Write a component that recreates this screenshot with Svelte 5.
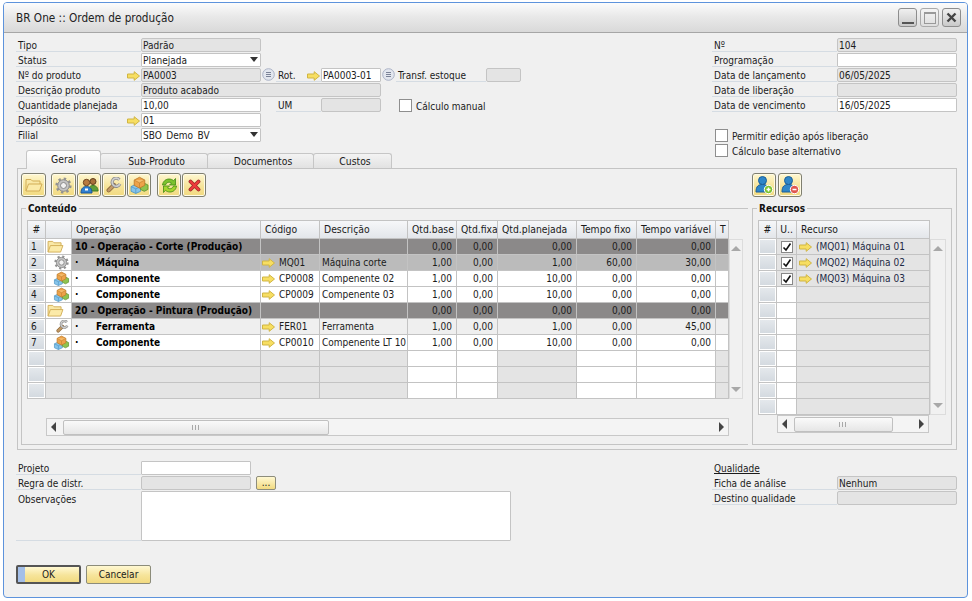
<script>
  const cols = [
    { t: '#', w: 19 }, { t: '', w: 26 }, { t: 'Operação', w: 189 }, { t: 'Código', w: 59 }, { t: 'Descrição', w: 88 },
    { t: 'Qtd.base', w: 49 }, { t: 'Qtd.fixa', w: 41 }, { t: 'Qtd.planejada', w: 79 }, { t: 'Tempo fixo', w: 60 }, { t: 'Tempo variável', w: 79 }, { t: 'T', w: 13 }
  ];
  const template = cols.map((c) => c.w + 'px').join(' ');
  const rows = [
    { n: 1, kind: 'group', icon: 'folder', op: '10 - Operação - Corte (Produção)', code: '', desc: '', v: ['0,00', '0,00', '0,00', '0,00', '0,00'] },
    { n: 2, kind: 'mach', icon: 'gear', op: 'Máquina', code: 'MQ01', desc: 'Máquina corte', v: ['1,00', '0,00', '1,00', '60,00', '30,00'] },
    { n: 3, kind: 'plain', icon: 'boxes', op: 'Componente', code: 'CP0008', desc: 'Compenente 02', v: ['1,00', '0,00', '10,00', '0,00', '0,00'] },
    { n: 4, kind: 'plain', icon: 'boxes', op: 'Componente', code: 'CP0009', desc: 'Compenente 03', v: ['1,00', '0,00', '10,00', '0,00', '0,00'] },
    { n: 5, kind: 'group', icon: 'folder', op: '20 - Operação - Pintura (Produção)', code: '', desc: '', v: ['0,00', '0,00', '0,00', '0,00', '0,00'] },
    { n: 6, kind: 'tool', icon: 'wrench', op: 'Ferramenta', code: 'FER01', desc: 'Ferramenta', v: ['1,00', '0,00', '1,00', '0,00', '45,00'] },
    { n: 7, kind: 'plain', icon: 'boxes', op: 'Componente', code: 'CP0010', desc: 'Compenente LT 10', v: ['1,00', '0,00', '10,00', '0,00', '0,00'] }
  ];
  const recursos = ['(MQ01) Máquina 01', '(MQ02) Máquina 02', '(MQ03) Máquina 03', '', '', '', '', '', '', '', ''];
</script>

{#snippet arrow()}
  <svg class="arrow" width="13" height="10" viewBox="0 0 13 10"><path d="M.5 3h6.700V.7L12.500 5l-5.300 4.300V7H.5z" fill="#f7de62" stroke="#d0b543" stroke-width="1"/></svg>
{/snippet}

{#snippet circle()}
  <svg class="circ" width="13" height="13" viewBox="0 0 13 13"><circle cx="6.500" cy="6.500" r="5.800" fill="#e2e6ee" stroke="#aab2c6"/><path d="M4 4.500h5M4 6.500h5M4 8.500h5" stroke="#7b8398"/></svg>
{/snippet}

{#snippet icon(name)}
  {#if name === 'folder'}
    <svg class="i-folder" viewBox="0 0 18 14"><path d="M1 13V1.500h5l1.500 1.500h7.500v3" fill="#f9e8a6" stroke="#d2ad55"/><path d="M1 13l2.500-7H17l-2.500 7z" fill="#fbeaa8" stroke="#d2ad55"/></svg>
  {:else if name === 'gear'}
    <svg class="i-gear" viewBox="0 0 17 17"><circle cx="8.500" cy="8.500" r="5.800" fill="#c4c4c4" stroke="#8a8a8a"/><circle cx="8.500" cy="8.500" r="6.800" fill="none" stroke="#929292" stroke-width="2.600" stroke-dasharray="2.400 2.940"/><circle cx="8.500" cy="8.500" r="3" fill="#f1f1f1" stroke="#888"/></svg>
  {:else if name === 'people'}
    <svg class="i-people" viewBox="0 0 19 17"><circle cx="13" cy="4.500" r="3" fill="#a8703a" stroke="#5f3f1e"/><path d="M8.500 14c0-4 2-5.500 4.500-5.500S18 10 18 14z" fill="#5f9e38" stroke="#3d7a22"/><circle cx="6.500" cy="5.500" r="3.200" fill="#b87a3f" stroke="#6e4520"/><path d="M1 16c0-5 2.500-6.500 5.500-6.500S12 11 12 16z" fill="#2f7fd0" stroke="#1b5596"/><path d="M5 11.500h3v2H5z" fill="#fff"/></svg>
  {:else if name === 'wrench'}
    <svg class="i-wrench" viewBox="0 0 15 15"><path d="M2.500 12.500L7.500 7.500" stroke="#8f6a3c" stroke-width="4" stroke-linecap="round"/><path d="M2.500 12.500L7.500 7.500" stroke="#c29a66" stroke-width="2.400" stroke-linecap="round"/><path d="M12.500 2.500A3.800 3.800 0 1 0 13 6.500" fill="none" stroke="#8c8c8c" stroke-width="3"/><path d="M12.500 2.500A3.800 3.800 0 1 0 13 6.500" fill="none" stroke="#cfcfcf" stroke-width="1.500"/></svg>
  {:else if name === 'boxes'}
    <svg class="i-boxes" viewBox="0 0 18 17"><path d="M1 10l4.500-2.200L10 10v4.500L5.500 16.500 1 14.500z" fill="#86c4ea" stroke="#4f96c4" stroke-width=".8"/><path d="M1 10l4.500 2.200L10 10M5.500 12.200v4.300" fill="none" stroke="#4f96c4" stroke-width=".7"/><path d="M10 8.500l3.500-1.700L17 8.500v4.200L13.500 14.500 10 12.700z" fill="#8fc34e" stroke="#5d9230" stroke-width=".8"/><path d="M4 3.800L9 1.200l5 2.600v5L9 11.500l-5-2.700z" fill="#eda24a" stroke="#bd7a2a" stroke-width=".8"/><path d="M4 3.800l5 2.700 5-2.700" fill="#f5bd6e" stroke="#c4822f" stroke-width=".7"/><path d="M9 6.500v5" stroke="#c4822f" stroke-width=".7"/></svg>
  {:else if name === 'sync'}
    <svg class="i-sync" viewBox="0 0 19 17"><path d="M2.500 8C3 4 6 2 9 2c2 0 3.500.7 4.500 1.700L15.500 1.500V8h-6l2-2C10 4.800 6.500 4.800 5.500 8z" fill="#7cc22e" stroke="#3f8a12" stroke-width=".8"/><path d="M16.500 9c-.5 4-3.500 6-6.500 6-2 0-3.500-.7-4.500-1.700L3.500 15.500V9h6l-2 2c1.500 1.200 5 1.200 6-2z" fill="#a6d62e" stroke="#3f8a12" stroke-width=".8"/></svg>
  {:else if name === 'x'}
    <svg class="i-x" viewBox="0 0 13 13"><path d="M2.500 2.500l8 8M10.500 2.500l-8 8" stroke="#9c2a2a" stroke-width="3.800" stroke-linecap="round"/><path d="M2.500 2.500l8 8M10.500 2.500l-8 8" stroke="#ee3b3b" stroke-width="2.300" stroke-linecap="round"/></svg>
  {:else if name === 'useradd' || name === 'userdel'}
    <svg class="i-user" viewBox="0 0 20 20"><circle cx="8.500" cy="5.500" r="4" fill="#2e86c8" stroke="#1c5f98"/><path d="M2 17c0-6 2.500-7.500 6.500-7.500S15 11 15 17z" fill="#2e86c8" stroke="#1c5f98"/><circle cx="14.500" cy="14.500" r="4.200" fill={name === 'useradd' ? '#7cc22e' : '#e0574f'} stroke="#fff"/><path d={name === 'useradd' ? 'M12.500 14.500h4M14.500 12.500v4' : 'M12.500 14.500h4'} stroke="#fff" stroke-width="1.500"/></svg>
  {/if}
{/snippet}

{#snippet hthumb(w)}
  <div class="thumb" style="width:{w}px"><span class="grip"></span></div>
{/snippet}

<div class="window">
  <header class="titlebar">
    <span class="title">BR One :: Ordem de produção</span>
    <div class="winbtns">
      <span class="wb"><i class="min"></i></span>
      <span class="wb pale"><i class="max"></i></span>
      <span class="wb"><svg width="11" height="11" viewBox="0 0 11 11"><path d="M1.500 1.500l8 8M9.500 1.500l-8 8" stroke="#444" stroke-width="2.400"/></svg></span>
    </div>
  </header>

  <section class="top">
    <div class="form">
      <div class="row"><span class="lb">Tipo</span><span class="f dis w120">Padrão</span></div>
      <div class="row"><span class="lb">Status</span><span class="f w120 sel">Planejada<b class="caret"></b></span></div>
      <div class="row">
        <span class="lb arrowed">Nº do produto{@render arrow()}</span><span class="f dis w120">PA0003</span>{@render circle()}
        <span class="lb rot arrowed">Rot.{@render arrow()}</span><span class="f w60">PA0003-01</span>{@render circle()}
        <span class="lb transf">Transf. estoque</span><span class="f dis w35"></span>
      </div>
      <div class="row"><span class="lb">Descrição produto</span><span class="f dis w240">Produto acabado</span></div>
      <div class="row">
        <span class="lb">Quantidade planejada</span><span class="f w120">10,00</span>
        <span class="gap14"></span><span class="lb rot">UM</span><span class="f dis w60"></span>
        <span class="cb mid"></span><span class="cbl">Cálculo manual</span>
      </div>
      <div class="row"><span class="lb arrowed">Depósito{@render arrow()}</span><span class="f w120">01</span></div>
      <div class="row"><span class="lb">Filial</span><span class="f w120 sel">SBO_Demo_BV<b class="caret"></b></span></div>
    </div>
    <div class="form rightform">
      <div class="row"><span class="lb">Nº</span><span class="f dis w120">104</span></div>
      <div class="row"><span class="lb">Programação</span><span class="f w120"></span></div>
      <div class="row"><span class="lb">Data de lançamento</span><span class="f dis w120">06/05/2025</span></div>
      <div class="row"><span class="lb">Data de liberação</span><span class="f dis w120"></span></div>
      <div class="row"><span class="lb">Data de vencimento</span><span class="f w120">16/05/2025</span></div>
      <div class="checks">
        <div class="row"><span class="cb"></span><span class="cbl">Permitir edição após liberação</span></div>
        <div class="row"><span class="cb"></span><span class="cbl">Cálculo base alternativo</span></div>
      </div>
    </div>
  </section>

  <nav class="tabs">
    <span class="tab active t1">Geral</span>
    <span class="tab t2">Sub-Produto</span>
    <span class="tab t3">Documentos</span>
    <span class="tab t4">Custos</span>
  </nav>

  <section class="panel">
    <div class="toolbar">
      <div class="tgroup">
        <span class="tb first">{@render icon('folder')}</span>
        <span class="tb w25">{@render icon('gear')}</span>
        <span class="tb">{@render icon('people')}</span>
        <span class="tb">{@render icon('wrench')}</span>
        <span class="tb">{@render icon('boxes')}</span>
        <span class="tb sep">{@render icon('sync')}</span>
        <span class="tb">{@render icon('x')}</span>
      </div>
      <div class="tgroup rt">
        <span class="tb">{@render icon('useradd')}</span>
        <span class="tb">{@render icon('userdel')}</span>
      </div>
    </div>

    <div class="groups">
      <fieldset class="gbox g1">
        <legend>Conteúdo</legend>
        <div class="gridwrap">
          <div class="grid">
            <div class="gr head" style="grid-template-columns:{template}">
              {#each cols as c, i}<span class="hc" class:center={i === 0}>{c.t}</span>{/each}
            </div>
            {#each rows as r}
              <div class="gr {r.kind}" style="grid-template-columns:{template}">
                <span class="c num"><i>{r.n}</i></span>
                <span class="c ic ic-{r.icon}">{@render icon(r.icon)}</span>
                {#if r.kind === 'group'}
                  <span class="c op groupop">{r.op}</span>
                {:else}
                  <span class="c op"><b class="dot">·</b><b class="opn">{r.op}</b></span>
                {/if}
                <span class="c code">{#if r.code}{@render arrow()}<span>{r.code}</span>{/if}</span>
                <span class="c desc">{r.desc}</span>
                {#each r.v as v}<span class="c val">{v}</span>{/each}
                <span class="c"></span>
              </div>
            {/each}
            {#each [0, 1, 2] as e}
              <div class="gr empty" style="grid-template-columns:{template}">
                <span class="c num"><i></i></span>
                <span class="c"></span><span class="c"></span><span class="c"></span><span class="c"></span>
                <span class="c wh"></span><span class="c wh"></span><span class="c"></span><span class="c wh"></span><span class="c wh"></span><span class="c"></span>
              </div>
            {/each}
          </div>
          <div class="vsb"><b class="up"></b><b class="down"></b></div>
        </div>
        <div class="hsb hsb1"><b class="left"></b>{@render hthumb(266)}<b class="right"></b></div>
      </fieldset>

      <fieldset class="gbox g2">
        <legend>Recursos</legend>
        <div class="gridwrap">
          <div class="grid">
            <div class="gr head rtpl">
              <span class="hc center">#</span><span class="hc center">U..</span><span class="hc">Recurso</span>
            </div>
            {#each recursos as r}
              <div class="gr empty rtpl">
                <span class="c num"><i></i></span>
                <span class="c chk" class:wh={!r}>{#if r}<span class="ck"><svg width="10" height="10" viewBox="0 0 10 10"><path d="M1.500 5.500l2.500 2.500 4.500-6.500" fill="none" stroke="#111" stroke-width="1.600"/></svg></span>{/if}</span>
                <span class="c res">{#if r}{@render arrow()}<span>{r}</span>{/if}</span>
              </div>
            {/each}
          </div>
          <div class="vsb"><b class="up"></b><b class="down"></b></div>
        </div>
        <div class="hsb hsb2"><b class="left"></b>{@render hthumb(99)}<b class="right"></b></div>
      </fieldset>
    </div>
  </section>

  <section class="bottom">
    <div class="form">
      <div class="row"><span class="lb">Projeto</span><span class="f w110"></span></div>
      <div class="row"><span class="lb">Regra de distr.</span><span class="f dis w110"></span><span class="dots">...</span></div>
      <div class="row obs"><span class="lb tall">Observações</span><span class="f area"></span></div>
    </div>
    <div class="form rightform">
      <div class="row"><span class="qual">Qualidade</span></div>
      <div class="row"><span class="lb">Ficha de análise</span><span class="f dis w120">Nenhum</span></div>
      <div class="row"><span class="lb">Destino qualidade</span><span class="f dis w120"></span></div>
    </div>
  </section>

  <footer class="actions">
    <span class="btn ok"><i></i>OK</span>
    <span class="btn">Cancelar</span>
  </footer>
</div>

<style>
  :global(body) { margin: 0; background: #fff; }
  .window {
    box-sizing: border-box; width: 965px; height: 596px; margin: 2px 0 0 3px;
    border: 1px solid #5d93dc; border-radius: 4px; background: #f0f0f0; overflow: hidden;
    font-family: "DejaVu Sans", sans-serif; font-stretch: condensed; font-size: 10px; color: #1b1b1b;
  }
  .titlebar {
    box-sizing: border-box; height: 30px; border-bottom: 1px solid #a6a6a6;
    background: linear-gradient(#fcfcfc, #e9e9e9 45%, #d9d9d9);
    display: flex; align-items: center; justify-content: space-between; padding: 0 6px 0 12px;
  }
  .title { font-size: 11.700px; color: #222; }
  .winbtns { display: flex; gap: 3px; }
  .wb {
    box-sizing: border-box; width: 19px; height: 19px; border: 1px solid #8d8d8d; border-radius: 3px;
    background: linear-gradient(#f0f0f0, #c9c9c9); display: flex; align-items: center; justify-content: center;
  }
  .wb.pale { border-color: #aaa; background: linear-gradient(#f4f4f4, #dedede); }
  .min { width: 12px; height: 2px; background: #555; margin-top: 10px; }
  .max { box-sizing: border-box; width: 12px; height: 12px; border: 1px solid #999; border-top-width: 2px; }

  .top { display: flex; justify-content: space-between; height: 112px; padding: 5px 10px 0 12px; }
  .form { display: flex; flex-direction: column; }
  .row { display: flex; height: 15px; flex: none; align-items: flex-start; }
  .lb {
    box-sizing: border-box; width: 125px; height: 14px; border-bottom: 1px solid #d5dce3; padding: 2px 0 0 2px;
    line-height: 14px; white-space: nowrap; display: flex; justify-content: space-between; align-items: center; flex: none;
  }
  .arrow { flex: none; margin-right: 1px; }
  .f {
    box-sizing: border-box; height: 14px; border: 1px solid #c4c4c4; border-radius: 1px; background: #fff; padding-left: 1px;
    line-height: 13px; white-space: nowrap; overflow: hidden; display: block; flex: none;
  }
  .dis { background: #e4e4e4; border-radius: 2px; }
  .w120 { width: 120px; } .w60 { width: 60px; } .w35 { width: 35px; } .w240 { width: 240px; } .w110 { width: 110px; }
  .sel { position: relative; }
  .caret { position: absolute; right: 2px; top: 3px; border: 4px solid transparent; border-top: 5px solid #333; border-bottom: 0; }
  .circ { margin: 0 1px; flex: none; }
  .lb.rot { width: 45px; }
  .lb.transf { width: 90px; }
  .gap14 { width: 15px; flex: none; }
  .cb { box-sizing: border-box; width: 13px; height: 13px; border: 1px solid #8e8e8e; background: #fff; flex: none; margin: 1px 4px 0 3px; }
  .cb.mid { margin-left: 18px; }
  .cbl { line-height: 15px; padding-top: 1px; white-space: nowrap; }
  .checks { margin-top: 15px; }
  .rightform { width: 245px; }

  .tabs { display: flex; height: 18px; margin-left: 22px; position: relative; z-index: 1; align-items: flex-end; }
  .tab {
    box-sizing: border-box; height: 15px; border: 1px solid #c6c6c6; border-bottom: 0; border-radius: 3px 3px 0 0;
    background: linear-gradient(#f3f3f3, #e2e2e2); text-align: center; line-height: 14px; margin-right: -1px; padding-left: 5px; font-size: 10.300px;
  }
  .tab.active { height: 19px; background: linear-gradient(#fff, #f0f0f0); line-height: 17px; margin-bottom: -1px; padding-left: 0; }
  .t1 { width: 75px; } .t2 { width: 108px; } .t3 { width: 107px; } .t4 { width: 79px; }

  .panel {
    box-sizing: border-box; width: 940px; height: 282px; margin-left: 13px; border: 1px solid #c4c4c4; padding: 4px 4px 0 3px;
  }
  .toolbar { display: flex; justify-content: space-between; height: 24px; }
  .tgroup { display: flex; gap: 1px; }
  .tgroup.rt { width: 200px; gap: 2px; }
  .tb {
    box-sizing: border-box; width: 24px; height: 24px; border: 1px solid #7f7f70; border-radius: 3px;
    background: linear-gradient(#fff8d2, #f6e49a 55%, #f2da80); box-shadow: inset 0 0 0 1px #fffbe6;
    display: flex; align-items: center; justify-content: center; flex: none;
  }
  .tb.first { width: 25px; margin-right: 4px; }
  .tb.w25 { width: 25px; }
  .tb.sep { margin-left: 5px; }
  .tb .i-folder { width: 18px; height: 14px; }
  .tb .i-gear { width: 17px; height: 17px; }
  .tb .i-people { width: 19px; height: 17px; }
  .tb .i-wrench { width: 16px; height: 16px; }
  .tb .i-boxes { width: 19px; height: 18px; }
  .tb .i-sync { width: 19px; height: 17px; }
  .tb .i-x { width: 13px; height: 13px; }
  .tb .i-user { width: 20px; height: 20px; }

  .groups { display: flex; margin-top: 5px; gap: 4px; }
  .gbox { box-sizing: border-box; margin: 0; padding: 5px 5px 0 5px; border: 1px solid #c4c4c4; height: 243px; min-width: 0; }
  .g1 { width: 727px; border-right: 0; }
  .g2 { width: 200px; }
  legend { font-weight: 700; padding: 0 2px; margin-left: -1px; line-height: 13px; color: #111; }

  .gridwrap { display: flex; align-items: flex-start; }
  .grid { flex: none; }
  .gr { display: grid; height: 16px; }
  .gr.head { height: 19px; }
  .rtpl { grid-template-columns: 19px 20px 133px; }
  .hc {
    box-sizing: border-box; border: 1px solid #c3c3c3; border-left: 0; background: linear-gradient(#f6f7f9, #e3e6ea);
    padding-left: 4px; line-height: 16px; white-space: nowrap; overflow: hidden; font-size: 10.300px;
  }
  .hc:first-child { border-left: 1px solid #c3c3c3; }
  .center { padding: 0; text-align: center; }
  .c {
    box-sizing: border-box; border-right: 1px solid #c3c3c3; border-bottom: 1px solid #c3c3c3;
    line-height: 15px; white-space: nowrap; overflow: hidden; background: #e4e4e4;
  }
  .num { border-left: 1px solid #c3c3c3; background: #fff; padding: 1px; }
  .num i { display: block; height: 13px; background: linear-gradient(#e4e8ec, #d4dae0); font-style: normal; padding-left: 2px; line-height: 13px; }
  .ic { display: flex; align-items: center; justify-content: flex-end; padding-right: 1px; }
  .ic .i-folder { width: 17px; height: 13px; margin-right: 6px; }
  .ic .i-gear { width: 15px; height: 15px; margin-right: 1px; }
  .ic .i-wrench { width: 13px; height: 13px; margin-right: 1px; }
  .ic .i-boxes { width: 17px; height: 15px; }
  .gr .ic, .gr .num { background: #fff; }
  .wh { background: #fff; }
  .group .c:not(.num):not(.ic) { background: #8b8989; }
  .mach .c:not(.num):not(.ic) { background: #bbb; }
  .plain .c { background: #fff; }
  .tool .c:not(.num):not(.ic) { background: #efefef; }
  .op { padding-left: 3px; color: #000; }
  .groupop { font-weight: 700; }
  .dot { display: inline-block; width: 21px; }
  .opn { font-weight: 700; }
  .code { display: flex; align-items: center; gap: 3px; padding-left: 1px; }
  .desc { padding-left: 2px; }
  .val { text-align: right; padding-right: 4px; }
  .chk { display: flex; align-items: center; justify-content: center; }
  .ck { box-sizing: border-box; width: 12px; height: 12px; border: 1px solid #888; background: #fff; display: flex; align-items: center; justify-content: center; }
  .res { display: flex; align-items: center; gap: 3px; padding-left: 2px; color: #1d2a44; }

  .vsb {
    box-sizing: border-box; width: 17px; margin-top: 19px; border: 1px solid #dcdcdc; background: #f1f1f1;
    display: flex; flex-direction: column; justify-content: space-between; align-items: center; padding: 6px 0; align-self: stretch;
  }
  .up { border: 5px solid transparent; border-bottom: 5px solid #a8a8a8; border-top: 0; }
  .down { border: 5px solid transparent; border-top: 5px solid #a8a8a8; border-bottom: 0; }
  .hsb {
    box-sizing: border-box; height: 18px; border: 1px solid #c8c8c8; background: #f4f4f4;
    display: flex; align-items: center; justify-content: flex-start; padding: 0 4px;
  }
  .hsb1 { width: 683px; margin: 19px 0 0 19px; }
  .hsb2 { width: 152px; margin: 0 0 0 19px; }
  .left { border: 5px solid transparent; border-right: 5px solid #444; border-left: 0; flex: none; }
  .right { border: 5px solid transparent; border-left: 5px solid #444; border-right: 0; flex: none; margin-left: auto; }
  .thumb {
    box-sizing: border-box; height: 15px; margin-left: 7px; border: 1px solid #c0c0c0; border-radius: 2px;
    background: linear-gradient(#fafafa, #e6e6e6); display: flex; align-items: center; justify-content: center; flex: none;
  }
  .grip { width: 9px; height: 5px; background: repeating-linear-gradient(90deg, #a8a8a8 0 1px, transparent 1px 3px); }

  .bottom { display: flex; justify-content: space-between; padding: 11px 10px 0 12px; }
  .obs { height: 50px; }
  .lb.tall { height: 50px; align-items: flex-start; line-height: 15px; padding-top: 1px; }
  .area { width: 370px; height: 50px; }
  .dots {
    box-sizing: border-box; width: 20px; height: 14px; margin-left: 5px; border: 1px solid #8d8d7c; border-radius: 2px;
    background: linear-gradient(#fff8d2, #f2da80); text-align: center; line-height: 11px;
  }
  .qual { padding: 1px 0 0 2px; text-decoration: underline; line-height: 14px; }

  .actions { display: flex; gap: 5px; padding: 10px 0 0 12px; margin-top: 14px; }
  .btn {
    box-sizing: border-box; width: 65px; height: 19px; border: 1px solid #8c8c7a; border-radius: 2px;
    background: linear-gradient(#fff8d2, #f6e49a 55%, #f2da80); text-align: center; line-height: 17px; position: relative;
  }
  .ok { border: 2px solid #555; line-height: 15px; overflow: hidden; }
  .ok i { position: absolute; left: 0; top: 0; bottom: 0; width: 7px; background: #a4bfe8; }
</style>
